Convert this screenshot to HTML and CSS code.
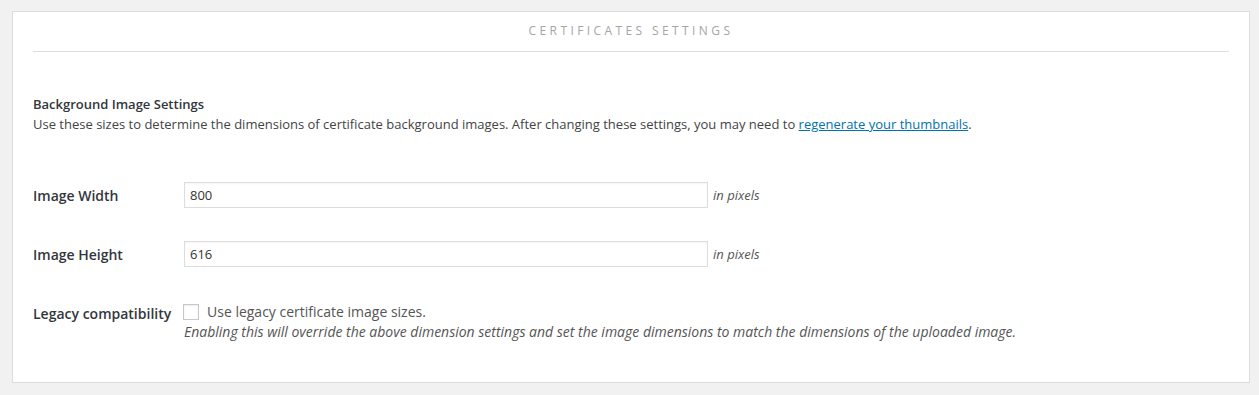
FILE: index.html
```html
<!DOCTYPE html>
<html lang="en">
<head>
  <meta charset="UTF-8">
  <title>Certificates Settings</title>
  <link rel="stylesheet" href="styles.css">
</head>
<body>
  <div class="panel">
    <h2 class="panel-title">Certificates Settings</h2>

    <div class="intro">
      <h3>Background Image Settings</h3>
      <p>Use these sizes to determine the dimensions of certificate background images. After changing these settings, you may need to <a href="#">regenerate your thumbnails</a>.</p>
    </div>

    <div class="form-rows">
      <label class="row-label" for="img-width">Image Width</label>
      <div class="row-field">
        <input type="text" id="img-width" class="text-input" value="800">
        <span class="unit">in pixels</span>
      </div>

      <label class="row-label" for="img-height">Image Height</label>
      <div class="row-field">
        <input type="text" id="img-height" class="text-input" value="616">
        <span class="unit">in pixels</span>
      </div>

      <span class="row-label">Legacy compatibility</span>
      <div class="row-field legacy">
        <label class="check-line"><span class="checkbox"></span>Use legacy certificate image sizes.</label>
        <p class="hint">Enabling this will override the above dimension settings and set the image dimensions to match the dimensions of the uploaded image.</p>
      </div>
    </div>
  </div>
</body>
</html>
```

FILE: styles.css
```css
body {
  margin: 0;
  background: #f1f1f1;
  font-family: "Open Sans", "Liberation Sans", sans-serif;
  font-size: 13px;
  color: #444;
}
.panel {
  margin: 11px 9px 0 12px;
  padding: 0 20px 40px;
  background: #fff;
  border: 1px solid #dcdcdc;
}
.panel-title {
  margin: 0;
  padding: 9px 0 10px;
  font-size: 12px;
  font-weight: 400;
  line-height: 20px;
  text-align: center;
  text-transform: uppercase;
  letter-spacing: 3.4px;
  color: #a5a5a5;
  border-bottom: 1px solid #dedede;
}
.intro {
  margin-top: 42px;
}
.intro h3 {
  margin: 0;
  font-size: 13px;
  font-weight: 600;
  line-height: 20px;
  color: #32373c;
}
.intro p {
  margin: 0;
  line-height: 20px;
}
.intro a {
  color: #0073aa;
}
.form-rows {
  display: grid;
  grid-template-columns: 151px 1fr;
  row-gap: 33px;
  margin-top: 48px;
}
.row-label {
  font-size: 14px;
  font-weight: 600;
  line-height: 26px;
  padding-top: 1px;
  height: 26px;
  box-sizing: border-box;
  color: #32373c;
}
.row-field {
  display: flex;
  align-items: center;
  gap: 5px;
  height: 26px;
}
.text-input {
  box-sizing: border-box;
  width: 524px;
  height: 26px;
  margin: 0;
  padding: 0 5px;
  border: 1px solid #ddd;
  font-family: inherit;
  font-size: 13px;
  color: #333;
  box-shadow: inset 0 1px 2px rgba(0, 0, 0, 0.04);
}
.unit {
  font-style: italic;
  font-size: 13px;
  color: #555;
}
.legacy {
  display: block;
  height: auto;
  padding-top: 2px;
}
.check-line {
  display: flex;
  align-items: center;
  gap: 8px;
  line-height: 20px;
  font-size: 14px;
  color: #555;
}
.checkbox {
  box-sizing: border-box;
  width: 16px;
  height: 16px;
  margin-left: -1px;
  border: 1px solid #c8c8c8;
  background: #fff;
  box-shadow: inset 0 1px 2px rgba(0, 0, 0, 0.08);
}
.hint {
  margin: 0;
  font-size: 14px;
  font-style: italic;
  line-height: 20px;
  color: #555;
}
```
